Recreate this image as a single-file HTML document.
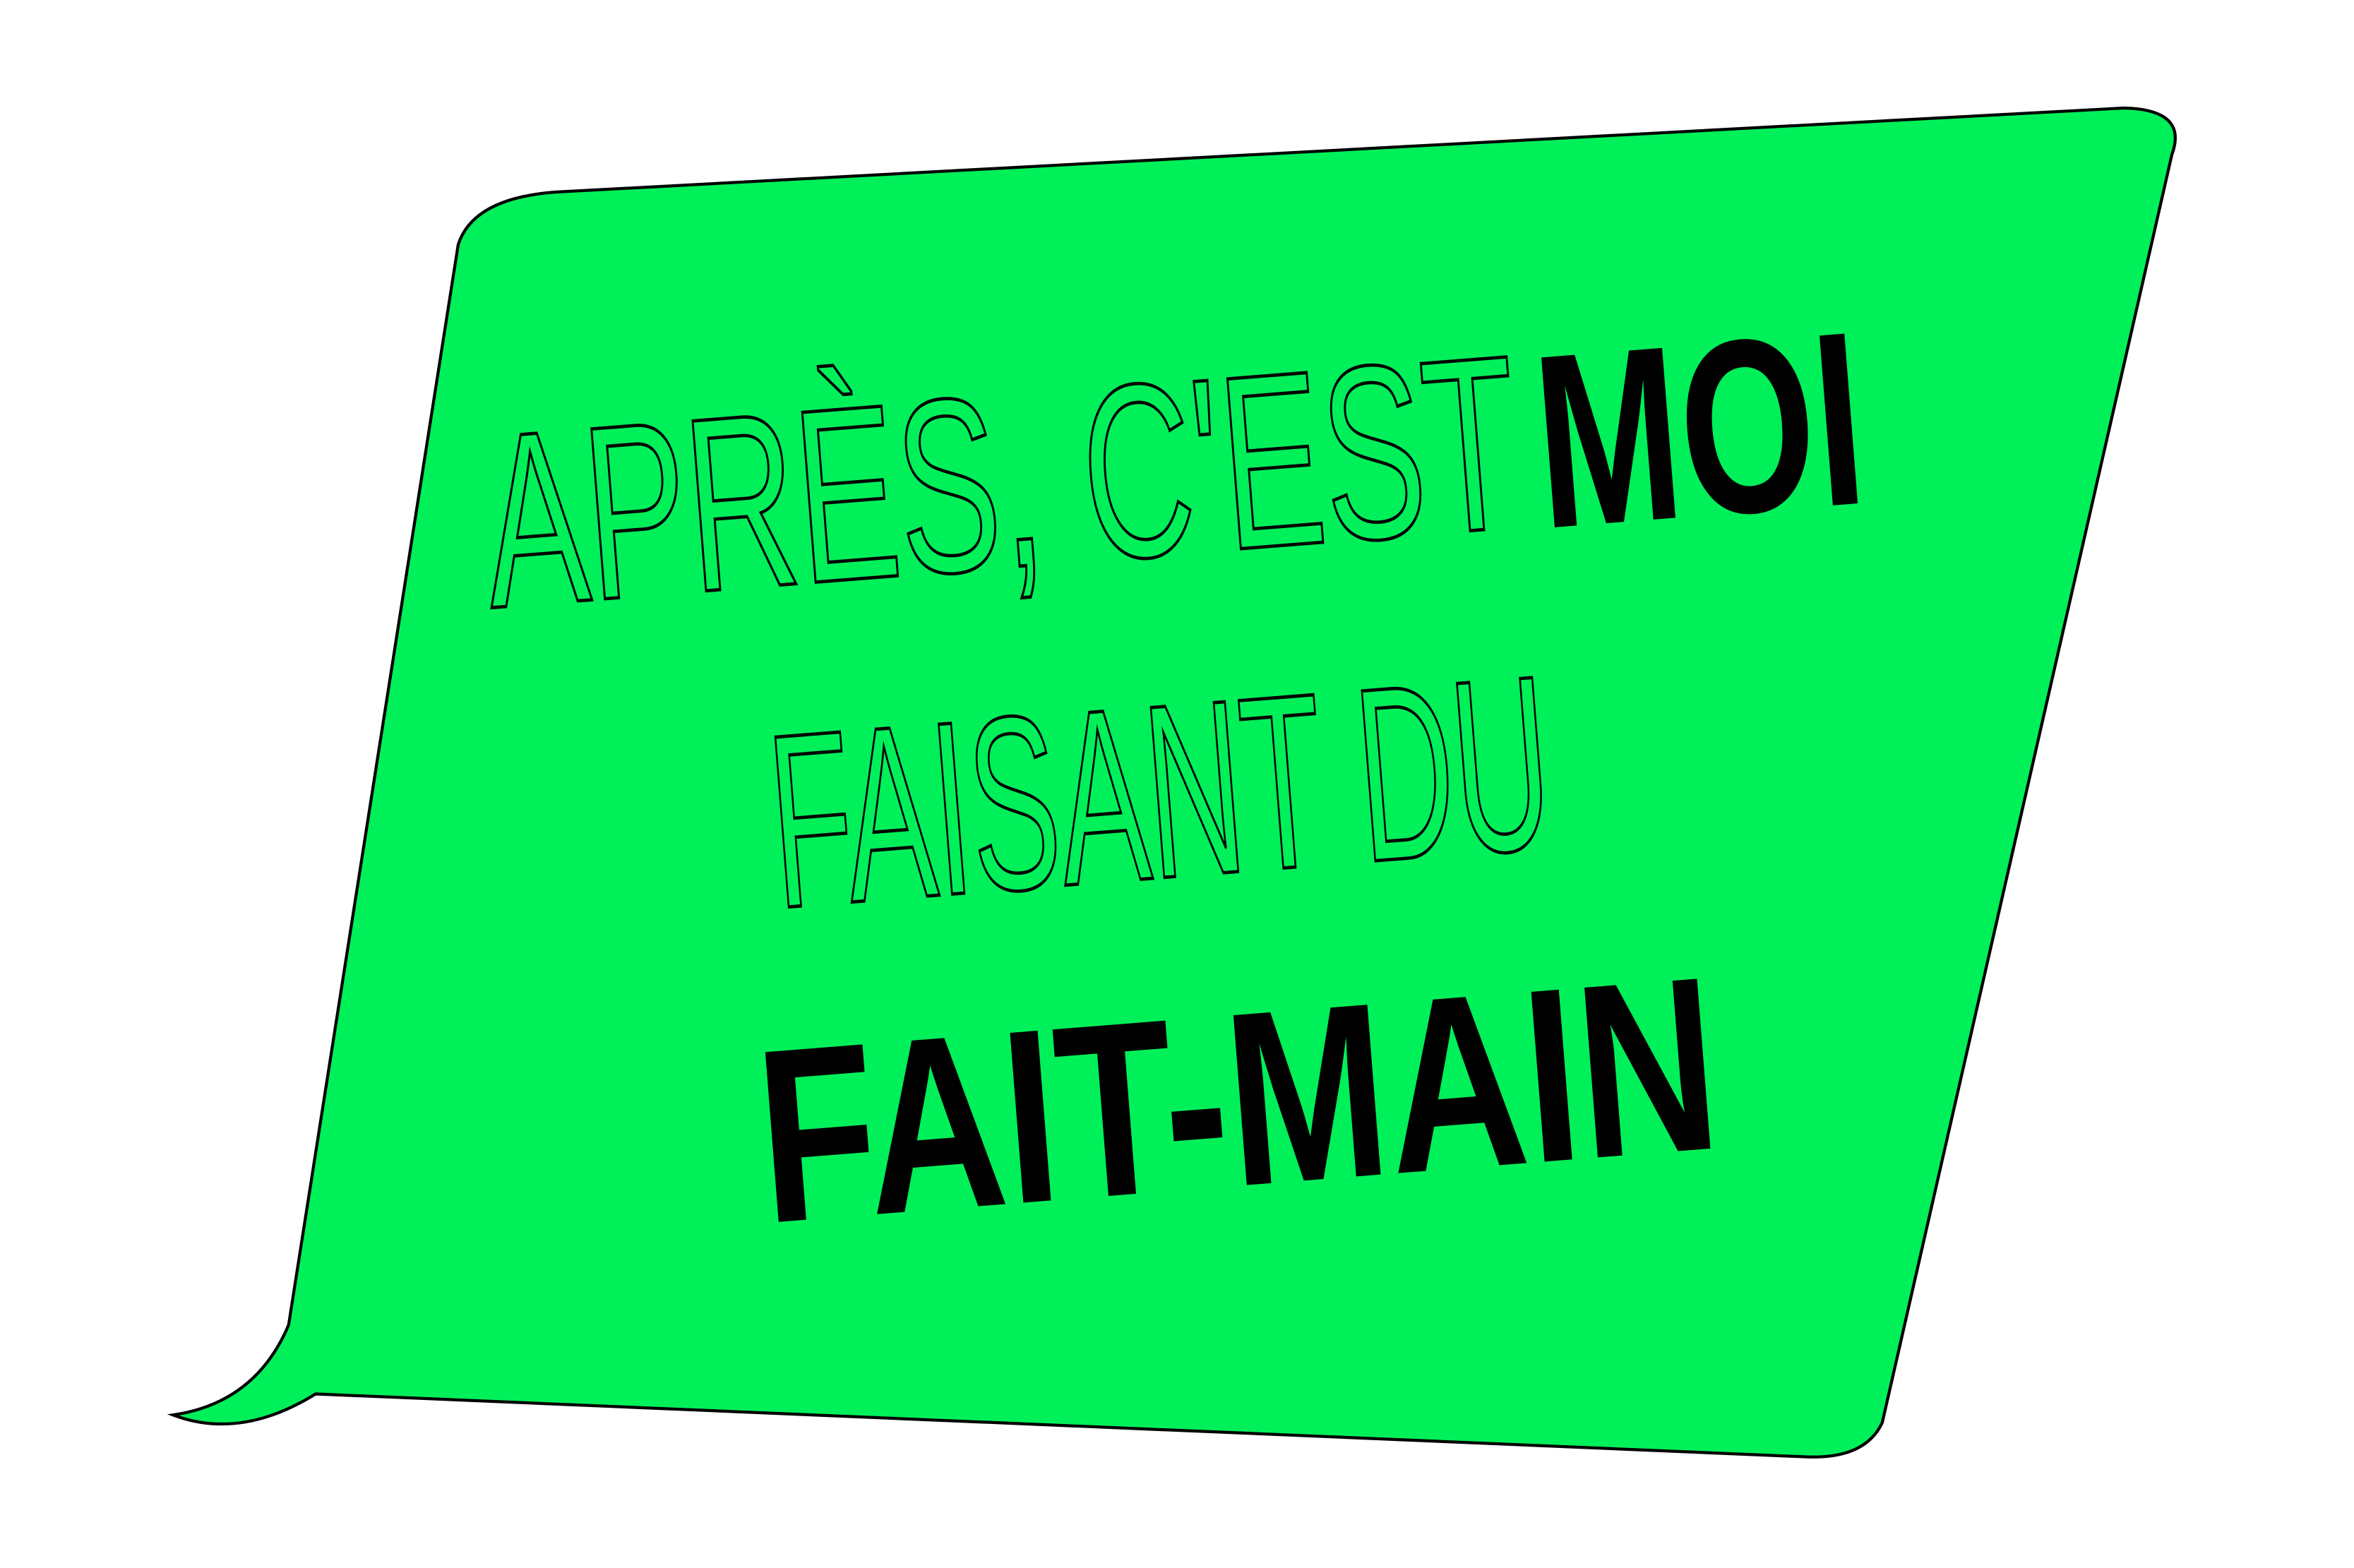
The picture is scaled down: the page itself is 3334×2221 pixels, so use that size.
<!DOCTYPE html>
<html><head><meta charset="utf-8"><style>html,body{margin:0;padding:0;background:#fff;}svg{display:block}</style></head>
<body>
<svg width="3334" height="2221" viewBox="0 0 1568 1045" xmlns="http://www.w3.org/2000/svg">
<rect width="1568" height="1045" fill="#fff"/>
<path d="M210 929 Q160 960 115 943 Q170 935 192 883 L305 163 Q315 132 370 128 L1415 72 Q1458 73 1447 103 L1254 948 Q1243 972 1205 971 Z" fill="#00f05a" stroke="#000" stroke-width="2"/>
<g font-family="Liberation Sans, sans-serif" font-size="165">
<text transform="translate(327,405) rotate(-4.5)" textLength="690" lengthAdjust="spacingAndGlyphs" fill="none" stroke="#000" stroke-width="2.2">APRÈS, C'EST</text>
<text transform="translate(1028,352) rotate(-4.5)" textLength="218" lengthAdjust="spacingAndGlyphs" fill="#000" font-weight="bold">MOI</text>
<text transform="translate(518,605) rotate(-4.5)" textLength="520" lengthAdjust="spacingAndGlyphs" fill="none" stroke="#000" stroke-width="2.2">FAISANT DU</text>
<text transform="translate(510,815) rotate(-4.5)" textLength="640" lengthAdjust="spacingAndGlyphs" fill="#000" font-weight="bold">FAIT-MAIN</text>
</g>
</svg>
</body></html>
